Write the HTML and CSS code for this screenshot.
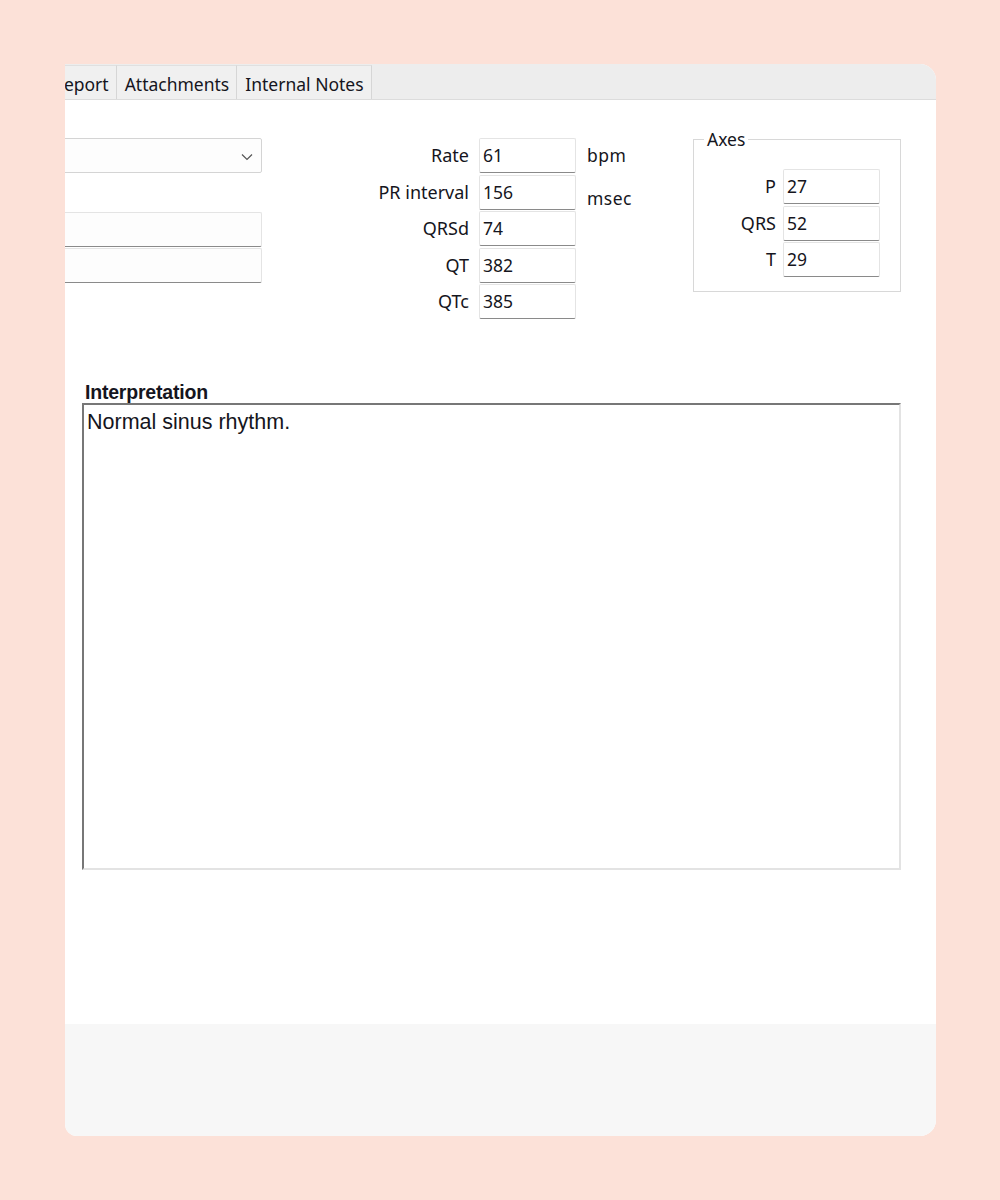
FILE: index.html
```html
<!DOCTYPE html>
<html lang="en">
<head>
    <meta charset="UTF-8">
    <title>ECG Report</title>
    <link rel="stylesheet" href="styles.css">
</head>
<body>
    <div class="window">
        <div class="tabs">
            <span class="tab tab-cut">Report</span>
            <span class="tab">Attachments</span>
            <span class="tab">Internal Notes</span>
        </div>

        <div class="content">
            <div class="top">
                <div class="left-col">
                    <div class="select">
                        <svg class="chevron" width="12" height="8" viewBox="0 0 12 8">
                            <path d="M1 1.5 L6 6.5 L11 1.5" fill="none" stroke="#555" stroke-width="1.2"/>
                        </svg>
                    </div>
                    <div class="text-input first"></div>
                    <div class="text-input"></div>
                </div>

                <div class="measures">
                    <span class="lbl">Rate</span><span class="box">61</span><span class="unit">bpm</span>
                    <span class="lbl">PR interval</span><span class="box">156</span><span class="unit unit-low">msec</span>
                    <span class="lbl">QRSd</span><span class="box">74</span><span class="unit"></span>
                    <span class="lbl">QT</span><span class="box">382</span><span class="unit"></span>
                    <span class="lbl">QTc</span><span class="box">385</span><span class="unit"></span>
                </div>

                <fieldset class="axes">
                    <legend>Axes</legend>
                    <div class="axes-grid">
                        <span class="lbl">P</span><span class="box">27</span>
                        <span class="lbl">QRS</span><span class="box">52</span>
                        <span class="lbl">T</span><span class="box">29</span>
                    </div>
                </fieldset>
            </div>

            <div class="interp">
                <div class="interp-title">Interpretation</div>
                <div class="interp-text">Normal sinus rhythm.</div>
            </div>
        </div>

        <div class="footer"></div>
    </div>
</body>
</html>
```

FILE: styles.css
```css
body {
    margin: 0;
    background-color: #fce1d8;
    font-family: "Noto Sans", "DejaVu Sans", sans-serif;
    color: #151520;
}
.window {
    margin: 64px 64px 0 65px;
    height: 1072px;
    background-color: white;
    border-radius: 0 16px 16px 12px;
    overflow: hidden;
    display: flex;
    flex-direction: column;
}
.tabs {
    height: 35px;
    background-color: #ededed;
    border-bottom: 1px solid #dcdcdc;
    display: flex;
    align-items: flex-end;
    flex-shrink: 0;
}
.tab {
    height: 34px;
    box-sizing: border-box;
    padding: 2px 7px 0 8px;
    border-right: 1px solid #d6d6d6;
    border-top: 1px solid #e0e0e0;
    background-color: #f0f0f0;
    font-size: 17.5px;
    line-height: 32px;
    white-space: nowrap;
}
.tab-cut {
    margin-left: -20px;
}
.content {
    flex: 1;
    padding: 38px 0 0 0;
}
.top {
    display: flex;
    align-items: flex-start;
}
.top > * {
    flex-shrink: 0;
}
.left-col {
    margin-left: -40px;
    width: 237px;
}
.select {
    height: 35px;
    box-sizing: border-box;
    border: 1px solid #d4d4d4;
    border-radius: 2px;
    background-color: #fdfdfd;
    position: relative;
}
.chevron {
    position: absolute;
    right: 8px;
    top: 14px;
}
.text-input {
    height: 35px;
    box-sizing: border-box;
    border: 1px solid #e4e4e4;
    border-bottom: 1px solid #8a8a8a;
    border-radius: 2px;
    background-color: #fdfdfd;
    margin-top: 1px;
}
.text-input.first {
    margin-top: 39px;
}
.measures {
    margin-left: 27px;
    display: grid;
    grid-template-columns: 180px 97px 60px;
    column-gap: 10px;
    row-gap: 1.5px;
    grid-auto-rows: 35px;
}
.lbl {
    text-align: right;
    font-size: 18px;
    line-height: 35px;
    white-space: nowrap;
}
.box {
    box-sizing: border-box;
    border: 1px solid #e4e4e4;
    border-bottom: 1px solid #8a8a8a;
    border-radius: 2px;
    background-color: white;
    padding-left: 3px;
    font-size: 17.5px;
    line-height: 33px;
}
.unit {
    font-size: 17.5px;
    line-height: 35px;
    padding-left: 1px;
    letter-spacing: 0.5px;
}
.unit-low {
    line-height: 46px;
}
.axes {
    margin: -8px 0 0 47px;
    width: 208px;
    height: 162px;
    box-sizing: border-box;
    border: 1px solid #d8d8d8;
    padding: 0;
}
.axes legend {
    margin-left: 10px;
    padding: 0 3px;
    font-size: 17.5px;
    line-height: 18px;
}
.axes-grid {
    margin-top: 21px;
    display: grid;
    grid-template-columns: 82px 97px;
    column-gap: 7px;
    row-gap: 1.5px;
    grid-auto-rows: 35px;
}
.interp {
    margin: 62px 35px 0 17px;
}
.interp-title {
    font-family: "Liberation Sans", Arial, sans-serif;
    font-weight: bold;
    font-size: 19.5px;
    letter-spacing: -0.2px;
    line-height: 22px;
    padding-left: 3px;
}
.interp-text {
    height: 467px;
    box-sizing: border-box;
    border-top: 2px solid #777;
    border-left: 2px solid #777;
    border-right: 2px solid #e3e3e3;
    border-bottom: 2px solid #e3e3e3;
    font-family: "Liberation Sans", Arial, sans-serif;
    font-size: 21.5px;
    line-height: 25px;
    padding: 5px 3px;
}
.footer {
    height: 112px;
    background-color: #f7f7f7;
    flex-shrink: 0;
}
```
